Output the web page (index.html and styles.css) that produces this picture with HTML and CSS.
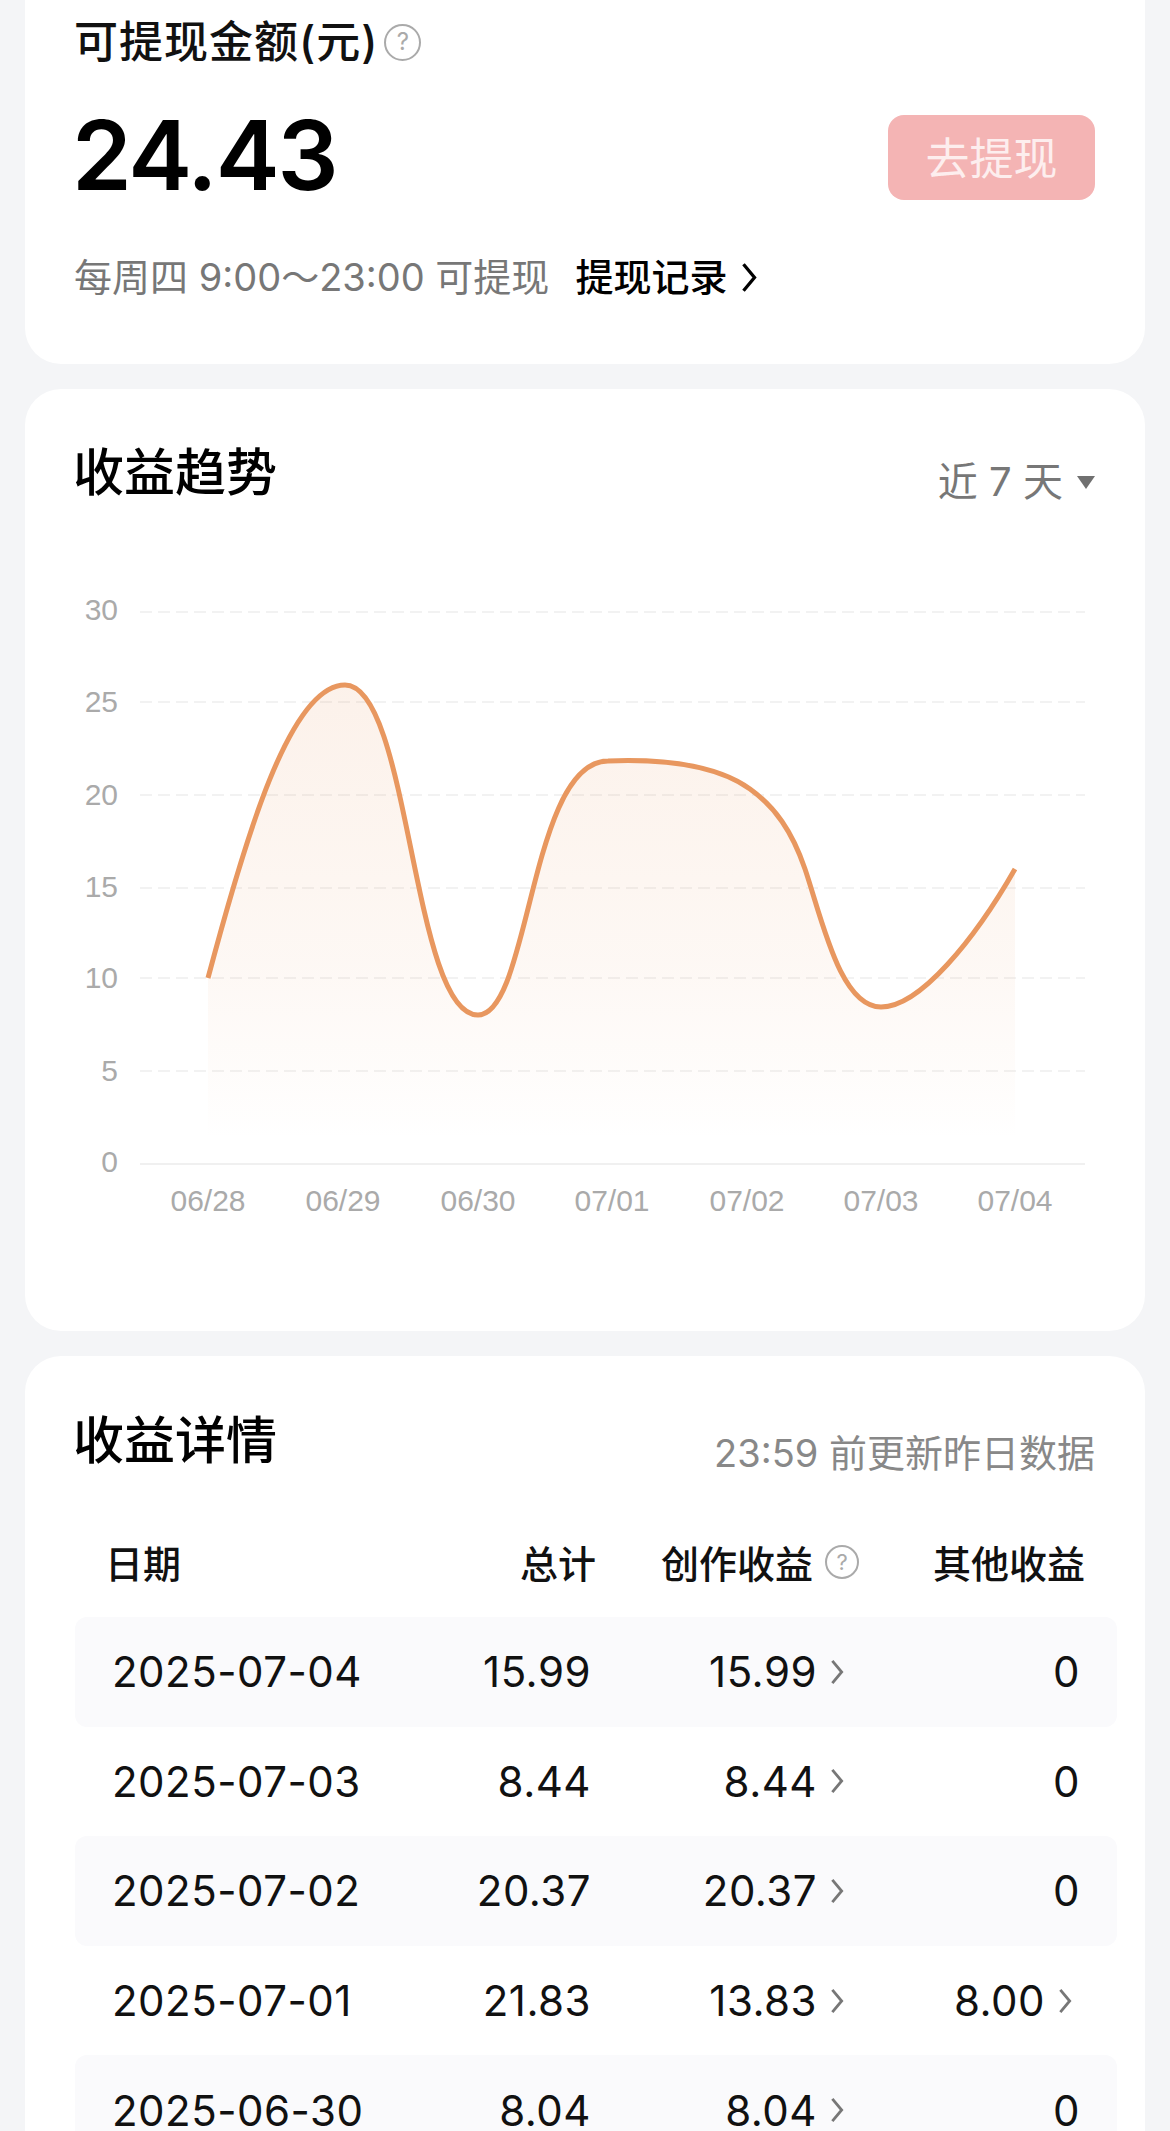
FILE: index.html
```html
<!DOCTYPE html>
<html lang="zh-CN">
<head>
    <meta charset="UTF-8">
    <meta name="viewport" content="width=device-width, initial-scale=1.0">
    <title>收益</title>
    <link rel="stylesheet" href="styles.css">
</head>
<body>
    <!-- 可提现金额 -->
    <section class="card card-balance">
        <div class="balance-title">可提现金额(元) <span class="help help-large">?</span></div>
        <div class="balance-row">
            <div class="balance-amount">24.43</div>
            <button class="withdraw-button">去提现</button>
        </div>
        <div class="balance-note">
            <span>每周四 9:00～23:00 可提现</span>
            <a class="record-link">提现记录
                <svg class="chevron-bold" viewBox="0 0 16 30"><path d="M3 3 L13 15 L3 27"/></svg>
            </a>
        </div>
    </section>

    <!-- 收益趋势 -->
    <section class="card card-trend">
        <div class="card-head trend-head">
            <h2 class="card-title">收益趋势</h2>
            <div class="range-select">近 7 天 <span class="range-arrow"></span></div>
        </div>
        <svg class="trend-chart" viewBox="25 590 1120 650">
            <defs>
                <linearGradient id="areaFade" gradientUnits="userSpaceOnUse" x1="0" y1="686" x2="0" y2="1140">
                    <stop offset="0" stop-color="#e8975f" stop-opacity="0.13"/>
                    <stop offset="0.6" stop-color="#e8975f" stop-opacity="0.07"/>
                    <stop offset="0.9" stop-color="#e8975f" stop-opacity="0.02"/>
                    <stop offset="1" stop-color="#e8975f" stop-opacity="0"/>
                </linearGradient>
            </defs>
            <g class="grid-lines">
                <line x1="140" x2="1085" y1="613" y2="613"/>
                <line x1="140" x2="1085" y1="703" y2="703"/>
                <line x1="140" x2="1085" y1="796" y2="796"/>
                <line x1="140" x2="1085" y1="889" y2="889"/>
                <line x1="140" x2="1085" y1="979" y2="979"/>
                <line x1="140" x2="1085" y1="1072" y2="1072"/>
            </g>
            <line class="base-line" x1="140" x2="1085" y1="1165" y2="1165"/>
            <path class="trend-area" d="M208 979 C245 840 290 686 345 686 C410 686 412 1016 478 1016 C530 1016 530 762 608 762 C660 760 715 765 750 790 C775 808 792 832 805 870 C822 920 840 1008 881 1008 C920 1008 975 940 1015 870 L1015 1140 L208 1140 Z"/>
            <path class="trend-line" d="M208 979 C245 840 290 686 345 686 C410 686 412 1016 478 1016 C530 1016 530 762 608 762 C660 760 715 765 750 790 C775 808 792 832 805 870 C822 920 840 1008 881 1008 C920 1008 975 940 1015 870"/>
            <g class="y-labels">
                <text x="118" y="621">30</text>
                <text x="118" y="713">25</text>
                <text x="118" y="806">20</text>
                <text x="118" y="898">15</text>
                <text x="118" y="989">10</text>
                <text x="118" y="1082">5</text>
                <text x="118" y="1173">0</text>
            </g>
            <g class="x-labels">
                <text x="208" y="1212">06/28</text>
                <text x="343" y="1212">06/29</text>
                <text x="478" y="1212">06/30</text>
                <text x="612" y="1212">07/01</text>
                <text x="747" y="1212">07/02</text>
                <text x="881" y="1212">07/03</text>
                <text x="1015" y="1212">07/04</text>
            </g>
        </svg>
    </section>

    <!-- 收益详情 -->
    <section class="card card-detail">
        <div class="card-head detail-head">
            <h2 class="card-title">收益详情</h2>
            <div class="update-note">23:59 前更新昨日数据</div>
        </div>
        <div class="table-head">
            <div>日期</div>
            <div class="cell-end">总计</div>
            <div class="cell-end">创作收益 <span class="help">?</span></div>
            <div class="cell-end">其他收益</div>
        </div>
        <div class="table-row">
            <div>2025-07-04</div>
            <div class="cell-end">15.99</div>
            <div class="cell-end">15.99 <svg class="chevron" viewBox="0 0 16 30"><path d="M3 3 L13 15 L3 27"/></svg></div>
            <div class="cell-end">0</div>
        </div>
        <div class="table-row">
            <div>2025-07-03</div>
            <div class="cell-end">8.44</div>
            <div class="cell-end">8.44 <svg class="chevron" viewBox="0 0 16 30"><path d="M3 3 L13 15 L3 27"/></svg></div>
            <div class="cell-end">0</div>
        </div>
        <div class="table-row">
            <div>2025-07-02</div>
            <div class="cell-end">20.37</div>
            <div class="cell-end">20.37 <svg class="chevron" viewBox="0 0 16 30"><path d="M3 3 L13 15 L3 27"/></svg></div>
            <div class="cell-end">0</div>
        </div>
        <div class="table-row">
            <div>2025-07-01</div>
            <div class="cell-end">21.83</div>
            <div class="cell-end">13.83 <svg class="chevron" viewBox="0 0 16 30"><path d="M3 3 L13 15 L3 27"/></svg></div>
            <div class="cell-end other-link">8.00 <svg class="chevron" viewBox="0 0 16 30"><path d="M3 3 L13 15 L3 27"/></svg></div>
        </div>
        <div class="table-row">
            <div>2025-06-30</div>
            <div class="cell-end">8.04</div>
            <div class="cell-end">8.04 <svg class="chevron" viewBox="0 0 16 30"><path d="M3 3 L13 15 L3 27"/></svg></div>
            <div class="cell-end">0</div>
        </div>
    </section>
</body>
</html>
```

FILE: styles.css
```css
html, body {
    margin: 0;
    height: 2131px;
    overflow: hidden;
}
body {
    background: #f4f5f7;
    font-family: Inter, "Noto Sans CJK SC", sans-serif;
    color: #111;
    display: flex;
    flex-direction: column;
    gap: 25px;
    padding: 0 25px;
    box-sizing: border-box;
}
.card {
    background: #fff;
    border-radius: 36px;
    flex-shrink: 0;
}

/* 可提现金额 */
.card-balance {
    border-radius: 0 0 36px 36px;
    height: 364px;
    padding: 17px 50px 0;
    box-sizing: border-box;
}
.balance-title {
    display: flex;
    align-items: center;
    gap: 6px;
    margin-left: -1px;
    font-size: 44px;
    line-height: 50px;
    font-weight: 500;
    letter-spacing: 1px;
}
.balance-row {
    display: flex;
    justify-content: space-between;
    align-items: center;
    margin-top: 48px;
    height: 85px;
}
.balance-amount {
    margin: -6px 0 0 -3px;
    font-size: 96px;
    font-weight: 600;
    letter-spacing: -2px;
    color: #000;
}
.withdraw-button {
    width: 207px;
    height: 85px;
    padding: 0 0 3px;
    border: none;
    border-radius: 16px;
    background: #f4b4b4;
    color: #fdeeee;
    font: inherit;
    font-size: 44px;
}
.balance-note {
    display: flex;
    align-items: center;
    gap: 26px;
    margin: 52px 0 0 -1px;
    font-size: 38px;
    line-height: 50px;
    color: #777;
}
.record-link {
    display: flex;
    align-items: center;
    gap: 13px;
    color: #000;
    font-weight: 500;
}
.chevron-bold {
    width: 18px;
    height: 33px;
    fill: none;
    stroke: #000;
    stroke-width: 3;
}

.help {
    display: inline-flex;
    justify-content: center;
    align-items: center;
    width: 34px;
    height: 34px;
    box-sizing: border-box;
    border: 2.5px solid #aaa;
    border-radius: 50%;
    color: #aaa;
    font-size: 22px;
    font-weight: 400;
    letter-spacing: 0;
    line-height: 1;
}
.help-large {
    width: 37px;
    height: 37px;
    font-size: 24px;
}

/* 卡片头部 */
.card-head {
    display: flex;
    justify-content: space-between;
    box-sizing: border-box;
    padding: 0 50px;
}
.card-title {
    margin: 0 0 0 -2px;
    font-size: 51px;
    line-height: 60px;
    font-weight: 500;
    color: #000;
}

/* 收益趋势 */
.card-trend {
    height: 942px;
}
.trend-head {
    height: 200px;
    padding-top: 54px;
}
.range-select {
    display: flex;
    align-items: center;
    gap: 14px;
    height: 60px;
    margin-top: 6px;
    font-size: 40px;
    color: #777;
}
.range-arrow {
    width: 18px;
    height: 13px;
    margin-top: 7px;
    background: #707070;
    clip-path: polygon(0 0, 100% 0, 50% 100%);
}
.trend-chart {
    display: block;
    width: 1120px;
    height: 650px;
}
.grid-lines line {
    stroke: #f2f2f2;
    stroke-width: 2;
    stroke-dasharray: 12 6;
}
.base-line {
    stroke: #f0f0f0;
    stroke-width: 2;
}
.trend-area {
    fill: url(#areaFade);
}
.trend-line {
    fill: none;
    stroke: #e8975f;
    stroke-width: 5;
}
.y-labels text, .x-labels text {
    font-family: "Liberation Sans", sans-serif;
    font-size: 30px;
    fill: #aaa;
}
.y-labels text {
    text-anchor: end;
}
.x-labels text {
    text-anchor: middle;
}

/* 收益详情 */
.card-detail {
    padding: 0 28px 0 50px;
}
.detail-head {
    height: 183px;
    padding: 55px 22px 0 0;
}
.update-note {
    height: 60px;
    margin-top: 12px;
    font-size: 38px;
    line-height: 60px;
    color: #888;
}
.table-head, .table-row {
    display: grid;
    align-items: center;
}
.table-head {
    grid-template-columns: 1fr 150px 263px 226px;
    height: 50px;
    margin: -5px 0 33px;
    padding: 0 32px 0 30px;
    font-size: 38px;
    font-weight: 500;
}
.table-row {
    grid-template-columns: 1fr 150px 254px 235px;
    height: 109.6px;
    padding: 0 37px 0 37px;
    border-radius: 12px;
    font-size: 42px;
    letter-spacing: 0.5px;
}
.table-row:nth-of-type(odd) {
    background: #fafafc;
}
.cell-end {
    display: flex;
    justify-content: flex-end;
    align-items: center;
    gap: 12px;
}
.chevron {
    width: 16px;
    height: 28px;
    fill: none;
    stroke: #777;
    stroke-width: 3;
}
.other-link {
    margin-right: 7px;
}
```
